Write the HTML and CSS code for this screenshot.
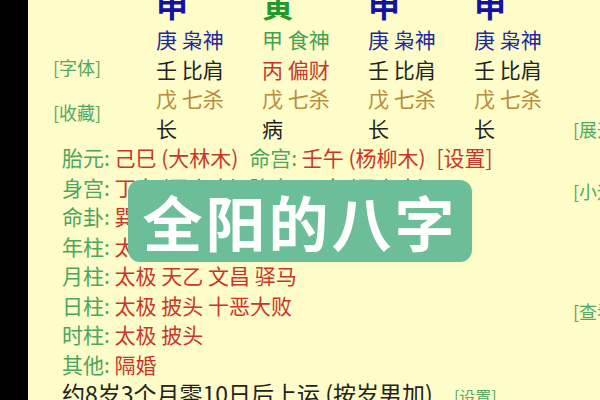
FILE: index.html
```html
<!DOCTYPE html>
<html lang="zh-CN">
<head>
  <meta charset="UTF-8" />
  <meta name="viewport" content="width=device-width, initial-scale=1.0"/>
  <title>八字排盘</title>
  <link rel="stylesheet" href="styles.css">
</head>
<body>
  <div class="page">
    <div class="strip"></div>

    <div class="sheet">
      <div class="content">
        <div class="pillars">
          <div class="tools">
            <a class="link" href="#">[字体]</a>
            <a class="link" href="#">[收藏]</a>
          </div>

          <div class="pillar">
            <div class="zhi blue">申</div>
            <div class="row blue">庚 枭神</div>
            <div class="row dark">壬 比肩</div>
            <div class="row brown">戊 七杀</div>
            <div class="row dark">长</div>
          </div>

          <div class="pillar">
            <div class="zhi green">寅</div>
            <div class="row green">甲 食神</div>
            <div class="row red">丙 偏财</div>
            <div class="row brown">戊 七杀</div>
            <div class="row dark">病</div>
          </div>

          <div class="pillar">
            <div class="zhi blue">申</div>
            <div class="row blue">庚 枭神</div>
            <div class="row dark">壬 比肩</div>
            <div class="row brown">戊 七杀</div>
            <div class="row dark">长</div>
          </div>

          <div class="pillar">
            <div class="zhi blue">申</div>
            <div class="row blue">庚 枭神</div>
            <div class="row dark">壬 比肩</div>
            <div class="row brown">戊 七杀</div>
            <div class="row dark">长</div>
          </div>
        </div>

        <div class="info">
          <div class="row"><span class="key">胎元:</span> <span class="val">己巳 (大林木)</span> <span class="key second">命宫:</span> <span class="val">壬午 (杨柳木)</span> <span class="val set">[设置]</span></div>
          <div class="row"><span class="key">身宫:</span> <span class="val">丁亥 (屋上土)</span> <span class="key second">胎息:</span> <span class="val">丁亥 (屋上土)</span></div>
          <div class="row"><span class="key">命卦:</span> <span class="val">巽卦 (东四命)</span></div>
          <div class="row"><span class="key">年柱:</span> <span class="val">太极 天乙 文昌 驿马</span></div>
          <div class="row"><span class="key">月柱:</span> <span class="val">太极 天乙 文昌 驿马</span></div>
          <div class="row"><span class="key">日柱:</span> <span class="val">太极 披头 十恶大败</span></div>
          <div class="row"><span class="key">时柱:</span> <span class="val">太极 披头</span></div>
          <div class="row"><span class="key">其他:</span> <span class="val">隔婚</span></div>
          <div class="luck">约8岁3个月零10日后上运 (按岁男加) <a class="link small" href="#">[设置]</a></div>
        </div>
      </div>

      <div class="side">
        <a class="link" href="#">[展开]</a>
        <a class="link" href="#">[小运]</a>
        <a class="link" href="#">[查看]</a>
      </div>

      <div class="banner">全阳的八字</div>
    </div>
  </div>
</body>
</html>
```

FILE: styles.css
```css
html, body {
  height: 100%;
}

body {
  margin: 0;
  overflow: hidden;
  font-family: "Noto Sans CJK SC", "Noto Sans", sans-serif;
  background-color: #000;
}

.page {
  display: flex;
  height: 400px;
}

.strip {
  width: 28px;
  flex: none;
  background-color: #000;
}

.sheet {
  flex: 1;
  position: relative;
  display: flex;
  padding-left: 25px;
  background-color: #fefcc8;
  overflow: hidden;
}

.content {
  width: 520px;
  flex: none;
}

.pillars {
  display: flex;
  margin-top: -19px;
}

.tools {
  width: 103px;
  flex: none;
  display: flex;
  flex-direction: column;
  gap: 21px;
  padding-top: 74px;
}

.link {
  color: #52a863;
  font-size: 18px;
  line-height: 24px;
  text-decoration: none;
  white-space: nowrap;
}

.pillar {
  width: 106px;
  flex: none;
}

.zhi {
  font-size: 32px;
  font-weight: 700;
  line-height: 44px;
}

.row {
  font-size: 21px;
  line-height: 29.5px;
  white-space: nowrap;
}

.blue { color: #1f2a9c; }
.zhi.blue { color: #1212a4; }
.green { color: #43a152; }
.zhi.green { color: #1f9a2c; }
.red { color: #c8362b; }
.brown { color: #b98b3e; }
.dark { color: #222; }

.info {
  padding-left: 9px;
}

.key {
  color: #4ba560;
}

.key.second {
  margin-left: 6px;
}

.val {
  color: #c8362b;
}

.val.set {
  margin-left: 6px;
}

.luck {
  font-size: 23px;
  line-height: 29.5px;
  color: #222;
  white-space: nowrap;
}

.link.small {
  font-size: 16px;
  margin-left: 16px;
}

.side {
  display: flex;
  flex-direction: column;
  padding-top: 117px;
  gap: 38px;
}

.side .link:last-child {
  margin-top: 58px;
}

.banner {
  position: absolute;
  left: 100px;
  top: 180px;
  width: 344px;
  height: 82px;
  border-radius: 12px;
  background-color: #6cbe99;
  color: #fff;
  font-size: 60px;
  font-weight: 700;
  letter-spacing: 3px;
  line-height: 82px;
  text-align: center;
}
```
